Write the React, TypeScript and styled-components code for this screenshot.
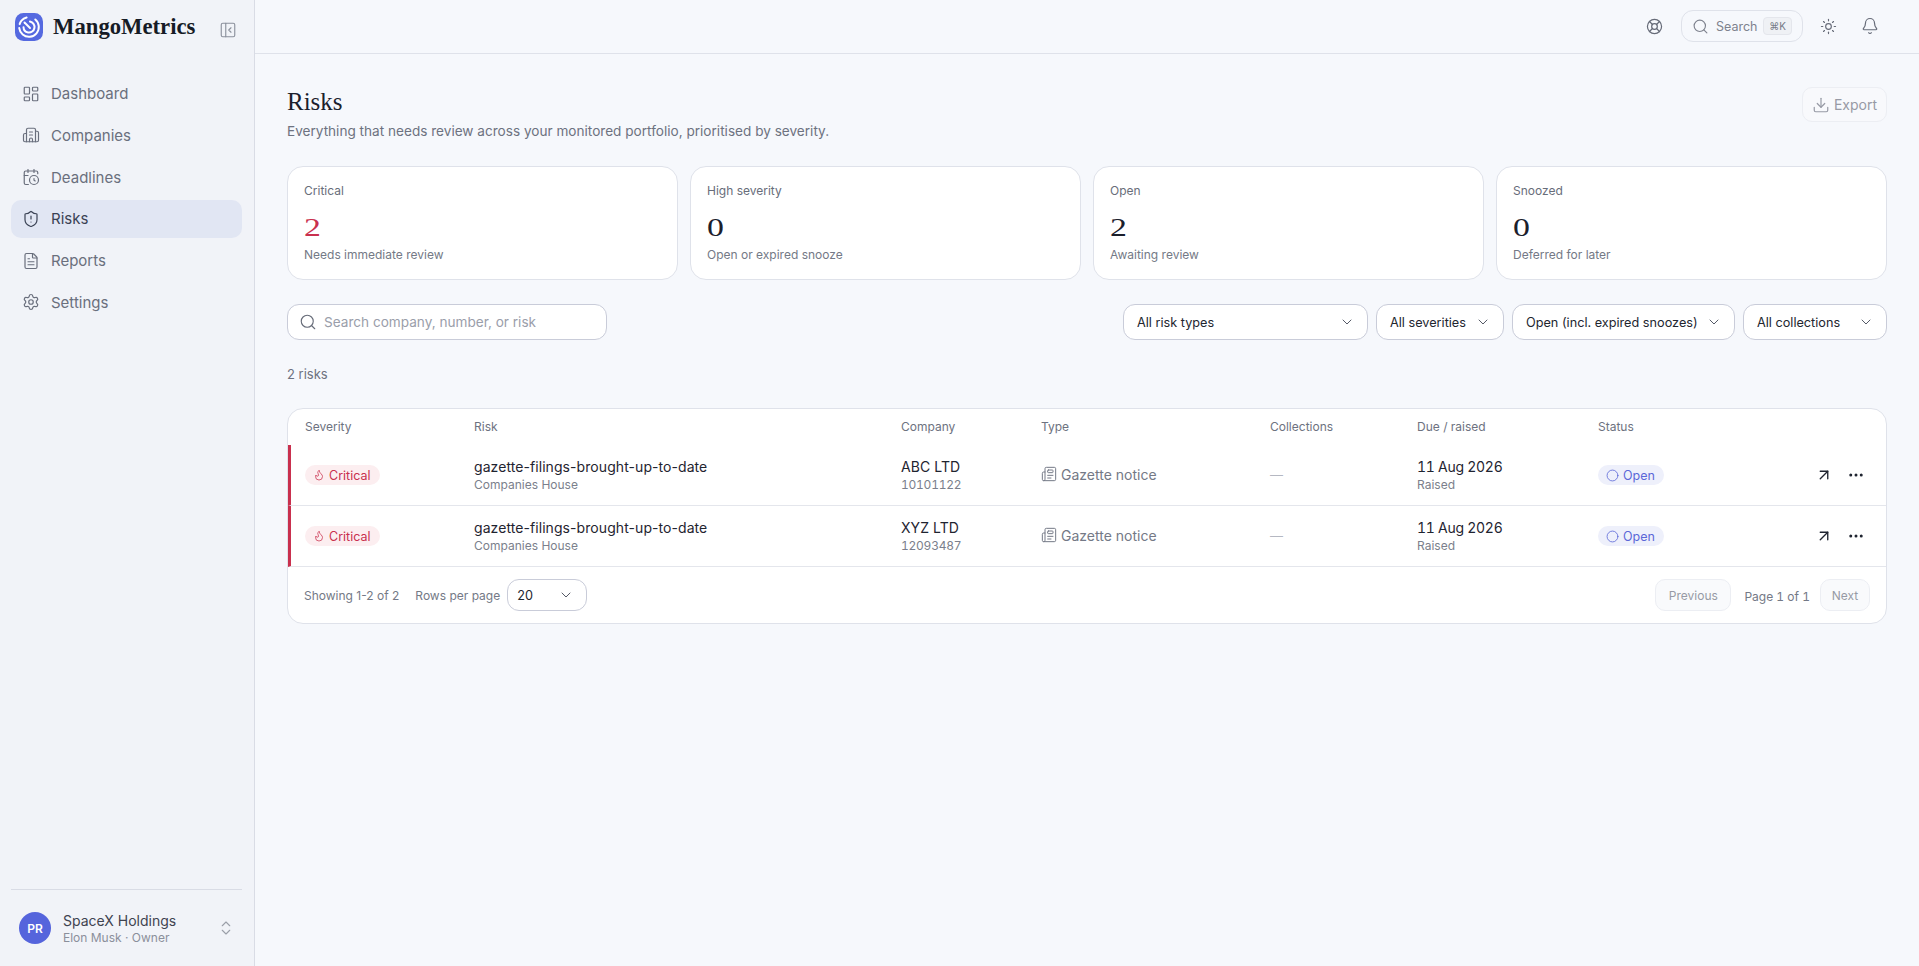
import React from "react";
import styled, { createGlobalStyle } from "styled-components";
import {
  Bell, Building2, CalendarClock, ChevronDown, ChevronsUpDown, Circle, Download, Ellipsis, FileText, Flame,
  LayoutDashboard, LifeBuoy, Newspaper, PanelLeftClose, Search, Settings, ShieldAlert, Sun, ArrowUpRight,
} from "lucide-react";

const Global = createGlobalStyle`
  html, body { margin: 0; padding: 0; height: 100%; }
  body { background: #f6f8fc; font-family: Inter, "Liberation Sans", sans-serif; color: #1f2430; }
  #root { height: 100%; }
  * { box-sizing: border-box; }
`;

const serif = `"Liberation Serif", "DejaVu Serif", serif`;
const GRID = "169px 427px 140px 229px 147px 181px 1fr";

const Shell = styled.div`
  display: flex;
  height: 966px;
  overflow: hidden;
`;
const Sidebar = styled.aside`
  width: 255px;
  flex: none;
  background: #f1f3f8;
  border-right: 1px solid #d9dce5;
  display: flex;
  flex-direction: column;
  padding: 0 12px 0 11px;
`;
const Brand = styled.div`
  height: 53px;
  display: flex;
  align-items: center;
  padding: 0 0 0 4px;
`;
const LogoWrap = styled.div`
  width: 28px;
  height: 28px;
  flex: none;
  margin-right: 10px;
`;
const BrandName = styled.span`
  font-family: ${serif};
  font-weight: 700;
  font-size: 22.7px;
  color: #161b26;
  flex: 1;
`;
const Collapse = styled.span`
  display: flex;
  color: #8b909c;
  margin-right: 5px;
  margin-top: 6px;
`;
const Nav = styled.nav`
  display: flex;
  flex-direction: column;
  gap: 3.8px;
  margin-top: 22px;
  flex: 1;
`;
const NavItem = styled.a<{ $active?: boolean }>`
  height: 38px;
  display: flex;
  align-items: center;
  gap: 11px;
  padding: 0 11px 1px;
  border-radius: 10px;
  font-size: 15px;
  font-weight: 400;
  color: ${(p) => (p.$active ? "#3a4254" : "#6a6f7d")};
  background: ${(p) => (p.$active ? "#e1e6f3" : "transparent")};
  svg { color: ${(p) => (p.$active ? "#3a4254" : "#6a6f7d")}; flex: none; }
`;
const Account = styled.div`
  border-top: 1px solid #d9dce5;
  height: 77px;
  display: flex;
  align-items: center;
  padding: 0 7px 0 8px;
  gap: 12px;
`;
const Avatar = styled.div`
  width: 32px;
  height: 32px;
  border-radius: 50%;
  background: #5564dc;
  color: #fff;
  font-size: 12px;
  font-weight: 600;
  display: grid;
  place-items: center;
  flex: none;
`;
const AccountText = styled.div`
  flex: 1;
  display: flex;
  flex-direction: column;
  gap: 1px;
`;
const AccountName = styled.span`
  font-size: 14px;
  font-weight: 400;
  color: #3f4350;
  line-height: 17px;
`;
const AccountRole = styled.span`
  font-size: 12px;
  color: #8b8f9b;
  line-height: 15px;
`;
const Updown = styled.span`
  display: flex;
  color: #9b9fa9;
`;
const Main = styled.main`
  flex: 1;
  min-width: 0;
  display: flex;
  flex-direction: column;
`;
const Topbar = styled.header`
  height: 54px;
  flex: none;
  border-bottom: 1px solid #dfe2ea;
  display: flex;
  align-items: center;
  justify-content: flex-end;
  padding: 0 40px 1px 0;
  color: #666b78;
`;
const TopIcon = styled.span<{ $gap?: number }>`
  display: flex;
  margin-left: ${(p) => p.$gap ?? 0}px;
`;
const SearchPill = styled.div`
  width: 122px;
  height: 32px;
  margin-left: 18px;
  border: 1px solid #dfe2ea;
  border-radius: 12px;
  display: flex;
  align-items: center;
  padding: 0 10px 0 10px;
  font-size: 12.5px;
  color: #7e828e;
  span:first-of-type { margin-left: 7px; flex: 1; }
`;
const Kbd = styled.kbd`
  font-family: Inter, "DejaVu Sans", sans-serif;
  font-size: 10px;
  line-height: 16px;
  height: 18px;
  padding: 0 5px;
  border: 1px solid #e4e6ec;
  border-radius: 4px;
  background: #eff1f5;
  color: #777c88;
`;
const Content = styled.div`
  padding: 0 32px;
  flex: 1;
`;
const PageHead = styled.div`
  display: flex;
  justify-content: space-between;
  align-items: flex-start;
  height: 112px;
  padding-top: 33px;
`;
const Title = styled.h1`
  margin: 0;
  font-family: ${serif};
  font-weight: 400;
  font-size: 25px;
  line-height: 30px;
  color: #1b202c;
`;
const Subtitle = styled.p`
  margin: 4px 0 0;
  font-size: 13.6px;
  line-height: 20px;
  color: #6d7280;
`;
const ExportButton = styled.button`
  width: 85px;
  height: 35px;
  border: 1px solid #eceef3;
  border-radius: 10px;
  background: #f8f9fc;
  color: #979aa5;
  font: 400 14px Inter, sans-serif;
  display: flex;
  align-items: center;
  justify-content: center;
  gap: 4px;
`;
const Stats = styled.section`
  display: grid;
  grid-template-columns: repeat(4, 1fr);
  gap: 12px;
`;
const StatCard = styled.div`
  height: 114px;
  background: #fff;
  border: 1px solid #dfe2ea;
  border-radius: 16px;
  padding: 16px 16px;
`;
const StatLabel = styled.div`
  font-size: 12px;
  line-height: 16px;
  color: #686d7a;
`;
const StatValue = styled.div<{ $danger?: boolean }>`
  font-family: ${serif};
  font-size: 26px;
  line-height: 32px;
  margin-top: 13px;
  transform: scaleX(1.3);
  transform-origin: left center;
  color: ${(p) => (p.$danger ? "#c9304e" : "#1b202c")};
`;
const StatNote = styled.div`
  font-size: 12px;
  line-height: 16px;
  margin-top: 3px;
  color: #747986;
`;
const FilterRow = styled.div`
  display: flex;
  justify-content: space-between;
  margin-top: 24px;
`;
const SearchField = styled.div`
  width: 320px;
  height: 36px;
  background: #fff;
  border: 1px solid #c9ccd9;
  border-radius: 12px;
  display: flex;
  align-items: center;
  gap: 7px;
  padding: 0 11px;
  font-size: 13.6px;
  color: #9a9eaa;
  svg { color: #666b78; }
`;
const Filters = styled.div`
  display: flex;
  gap: 8px;
`;
const Select = styled.div<{ $w: number; $h?: number; $pad?: number }>`
  width: ${(p) => p.$w}px;
  height: ${(p) => p.$h ?? 36}px;
  background: #fff;
  border: 1px solid #c9ccd9;
  border-radius: 12px;
  display: flex;
  align-items: center;
  justify-content: space-between;
  padding: 0 12px 0 ${(p) => p.$pad ?? 14}px;
  font-size: 12.7px;
  color: #22262f;
  white-space: nowrap;
  svg { color: #555a67; flex: none; }
`;
const Count = styled.div`
  margin-top: 24px;
  font-size: 13px;
  line-height: 20px;
  color: #6d7280;
`;
const TableCard = styled.section`
  margin-top: 24px;
  background: #fff;
  border: 1px solid #dfe2ea;
  border-radius: 16px;
  overflow: hidden;
`;
const Row = styled.div`
  display: grid;
  grid-template-columns: ${GRID};
  align-items: center;
  padding-left: 14px;
`;
const HeadRow = styled(Row)`
  height: 36px;
  padding: 0 0 1px 17px;
  font-size: 12px;
  font-weight: 400;
  color: #6d7280;
`;
const DataRow = styled(Row)`
  height: 61px;
  border-left: 3px solid #c9304e;
  border-bottom: 1px solid #e4e6ec;
`;
const Badge = styled.span<{ $tone: "danger" | "info" }>`
  display: inline-flex;
  justify-self: start;
  align-items: center;
  gap: 4px;
  height: 20px;
  padding: 0 9px 0 8px;
  border-radius: 10px;
  font-size: 12.5px;
  font-weight: 400;
  color: ${(p) => (p.$tone === "danger" ? "#c9304e" : "#5b68d8")};
  background: ${(p) => (p.$tone === "danger" ? "#fceef0" : "#eef0fb")};
`;
const Stack = styled.div`
  display: flex;
  flex-direction: column;
  gap: 1px;
`;
const Primary = styled.span<{ $num?: boolean }>`
  font-size: 14px;
  line-height: 18px;
  font-weight: 400;
  color: #1f2430;
  letter-spacing: ${(p) => (p.$num ? "-0.02em" : "0.005em")};
  font-variant-numeric: ${(p) => (p.$num ? "tabular-nums" : "normal")};
`;
const Secondary = styled.span<{ $num?: boolean }>`
  font-size: 12px;
  line-height: 15px;
  color: #7b7f8c;
  letter-spacing: ${(p) => (p.$num ? "-0.02em" : "normal")};
  font-variant-numeric: ${(p) => (p.$num ? "tabular-nums" : "normal")};
`;
const TypeCell = styled.span`
  display: flex;
  align-items: center;
  gap: 4px;
  font-size: 14px;
  color: #747986;
  padding-bottom: 2px;
`;
const Dash = styled.span`
  font-size: 13px;
  color: #b5b8c2;
`;
const StatusCell = styled.div`
  display: flex;
  align-items: center;
  justify-content: space-between;
  padding-right: 21px;
`;
const Actions = styled.div`
  display: flex;
  align-items: center;
  gap: 14px;
  color: #1f2430;
`;
const Footer = styled.div`
  height: 56px;
  display: flex;
  align-items: center;
  justify-content: space-between;
  padding: 0 16px;
  font-size: 12px;
  color: #747986;
`;
const FootGroup = styled.div`
  display: flex;
  align-items: center;
  gap: 16px;
`;
const PerPage = styled.div`
  display: flex;
  align-items: center;
  gap: 7px;
`;
const PageButton = styled.button<{ $w: number }>`
  width: ${(p) => p.$w}px;
  height: 32px;
  border: 1px solid #eceef3;
  border-radius: 10px;
  background: #f9fafc;
  color: #979aa5;
  font: 400 12px Inter, sans-serif;
  padding: 0;
`;
const PageLabel = styled.span`
  margin: 2px -6px 0 -3px;
  font-variant-numeric: tabular-nums;
`;

function Logo() {
  return (
    <svg width="28" height="28" viewBox="0 0 28 28" fill="none">
      <rect width="28" height="28" rx="8.5" fill="#5569e0" />
      <circle cx="14" cy="14" r="9.8" stroke="#fff" strokeWidth="2" strokeLinecap="round" strokeDasharray="38 4 10 9.6" transform="rotate(-50 14 14)" />
      <circle cx="14" cy="14" r="5.5" stroke="#fff" strokeWidth="2" strokeLinecap="round" strokeDasharray="24 10.6" transform="rotate(-80 14 14)" />
      <path d="M15 15 L9.5 9.5" stroke="#fff" strokeWidth="2" strokeLinecap="round" />
    </svg>
  );
}

const nav = [
  { label: "Dashboard", Icon: LayoutDashboard },
  { label: "Companies", Icon: Building2 },
  { label: "Deadlines", Icon: CalendarClock },
  { label: "Risks", Icon: ShieldAlert, active: true },
  { label: "Reports", Icon: FileText },
  { label: "Settings", Icon: Settings },
];
const stats = [
  { label: "Critical", value: "2", note: "Needs immediate review", danger: true },
  { label: "High severity", value: "0", note: "Open or expired snooze" },
  { label: "Open", value: "2", note: "Awaiting review" },
  { label: "Snoozed", value: "0", note: "Deferred for later" },
];
const filters = [
  { label: "All risk types", w: 245 },
  { label: "All severities", w: 128 },
  { label: "Open (incl. expired snoozes)", w: 223 },
  { label: "All collections", w: 144 },
];
const rows = [
  { company: "ABC LTD", number: "10101122" },
  { company: "XYZ LTD", number: "12093487" },
];
const heads = ["Severity", "Risk", "Company", "Type", "Collections", "Due / raised", "Status"];

export default function App() {
  return (
    <Shell>
      <Global />
      <Sidebar>
        <Brand>
          <LogoWrap><Logo /></LogoWrap>
          <BrandName>MangoMetrics</BrandName>
          <Collapse><PanelLeftClose size={18} strokeWidth={1.5} /></Collapse>
        </Brand>
        <Nav>
          {nav.map(({ label, Icon, active }) => (
            <NavItem key={label} $active={active}>
              <Icon size={18} strokeWidth={1.6} />
              {label}
            </NavItem>
          ))}
        </Nav>
        <Account>
          <Avatar>PR</Avatar>
          <AccountText>
            <AccountName>SpaceX Holdings</AccountName>
            <AccountRole>Elon Musk · Owner</AccountRole>
          </AccountText>
          <Updown><ChevronsUpDown size={18} strokeWidth={1.5} /></Updown>
        </Account>
      </Sidebar>
      <Main>
        <Topbar>
          <TopIcon><LifeBuoy size={17} strokeWidth={1.7} /></TopIcon>
          <SearchPill>
            <Search size={17} strokeWidth={1.6} />
            <span>Search</span>
            <Kbd>⌘K</Kbd>
          </SearchPill>
          <TopIcon $gap={17}><Sun size={17} strokeWidth={1.6} /></TopIcon>
          <TopIcon $gap={24}><Bell size={18} strokeWidth={1.6} /></TopIcon>
        </Topbar>
        <Content>
          <PageHead>
            <div>
              <Title>Risks</Title>
              <Subtitle>Everything that needs review across your monitored portfolio, prioritised by severity.</Subtitle>
            </div>
            <ExportButton><Download size={18} strokeWidth={1.6} />Export</ExportButton>
          </PageHead>
          <Stats>
            {stats.map((s) => (
              <StatCard key={s.label}>
                <StatLabel>{s.label}</StatLabel>
                <StatValue $danger={s.danger}>{s.value}</StatValue>
                <StatNote>{s.note}</StatNote>
              </StatCard>
            ))}
          </Stats>
          <FilterRow>
            <SearchField><Search size={18} strokeWidth={1.5} />Search company, number, or risk</SearchField>
            <Filters>
              {filters.map((f) => (
                <Select key={f.label} $w={f.w} $pad={13}>{f.label}<ChevronDown size={16} strokeWidth={1.5} /></Select>
              ))}
            </Filters>
          </FilterRow>
          <Count>2 risks</Count>
          <TableCard>
            <HeadRow>{heads.map((h) => <span key={h}>{h}</span>)}</HeadRow>
            {rows.map((r) => (
              <DataRow key={r.company}>
                <Badge $tone="danger"><Flame size={12} strokeWidth={1.5} />Critical</Badge>
                <Stack>
                  <Primary>gazette-filings-brought-up-to-date</Primary>
                  <Secondary>Companies House</Secondary>
                </Stack>
                <Stack>
                  <Primary>{r.company}</Primary>
                  <Secondary $num>{r.number}</Secondary>
                </Stack>
                <TypeCell><Newspaper size={16} strokeWidth={1.5} />Gazette notice</TypeCell>
                <Dash>—</Dash>
                <Stack>
                  <Primary $num>11 Aug 2026</Primary>
                  <Secondary>Raised</Secondary>
                </Stack>
                <StatusCell>
                  <Badge $tone="info"><Circle size={13} strokeWidth={1.5} />Open</Badge>
                  <Actions>
                    <ArrowUpRight size={18} strokeWidth={1.8} />
                    <Ellipsis size={18} strokeWidth={2} />
                  </Actions>
                </StatusCell>
              </DataRow>
            ))}
            <Footer>
              <FootGroup>
                <span>Showing 1-2 of 2</span>
                <PerPage>
                  Rows per page
                  <Select $w={80} $h={32} $pad={9}>20<ChevronDown size={16} strokeWidth={1.5} /></Select>
                </PerPage>
              </FootGroup>
              <FootGroup>
                <PageButton $w={76}>Previous</PageButton>
                <PageLabel>Page 1 of 1</PageLabel>
                <PageButton $w={50}>Next</PageButton>
              </FootGroup>
            </Footer>
          </TableCard>
        </Content>
      </Main>
    </Shell>
  );
}
